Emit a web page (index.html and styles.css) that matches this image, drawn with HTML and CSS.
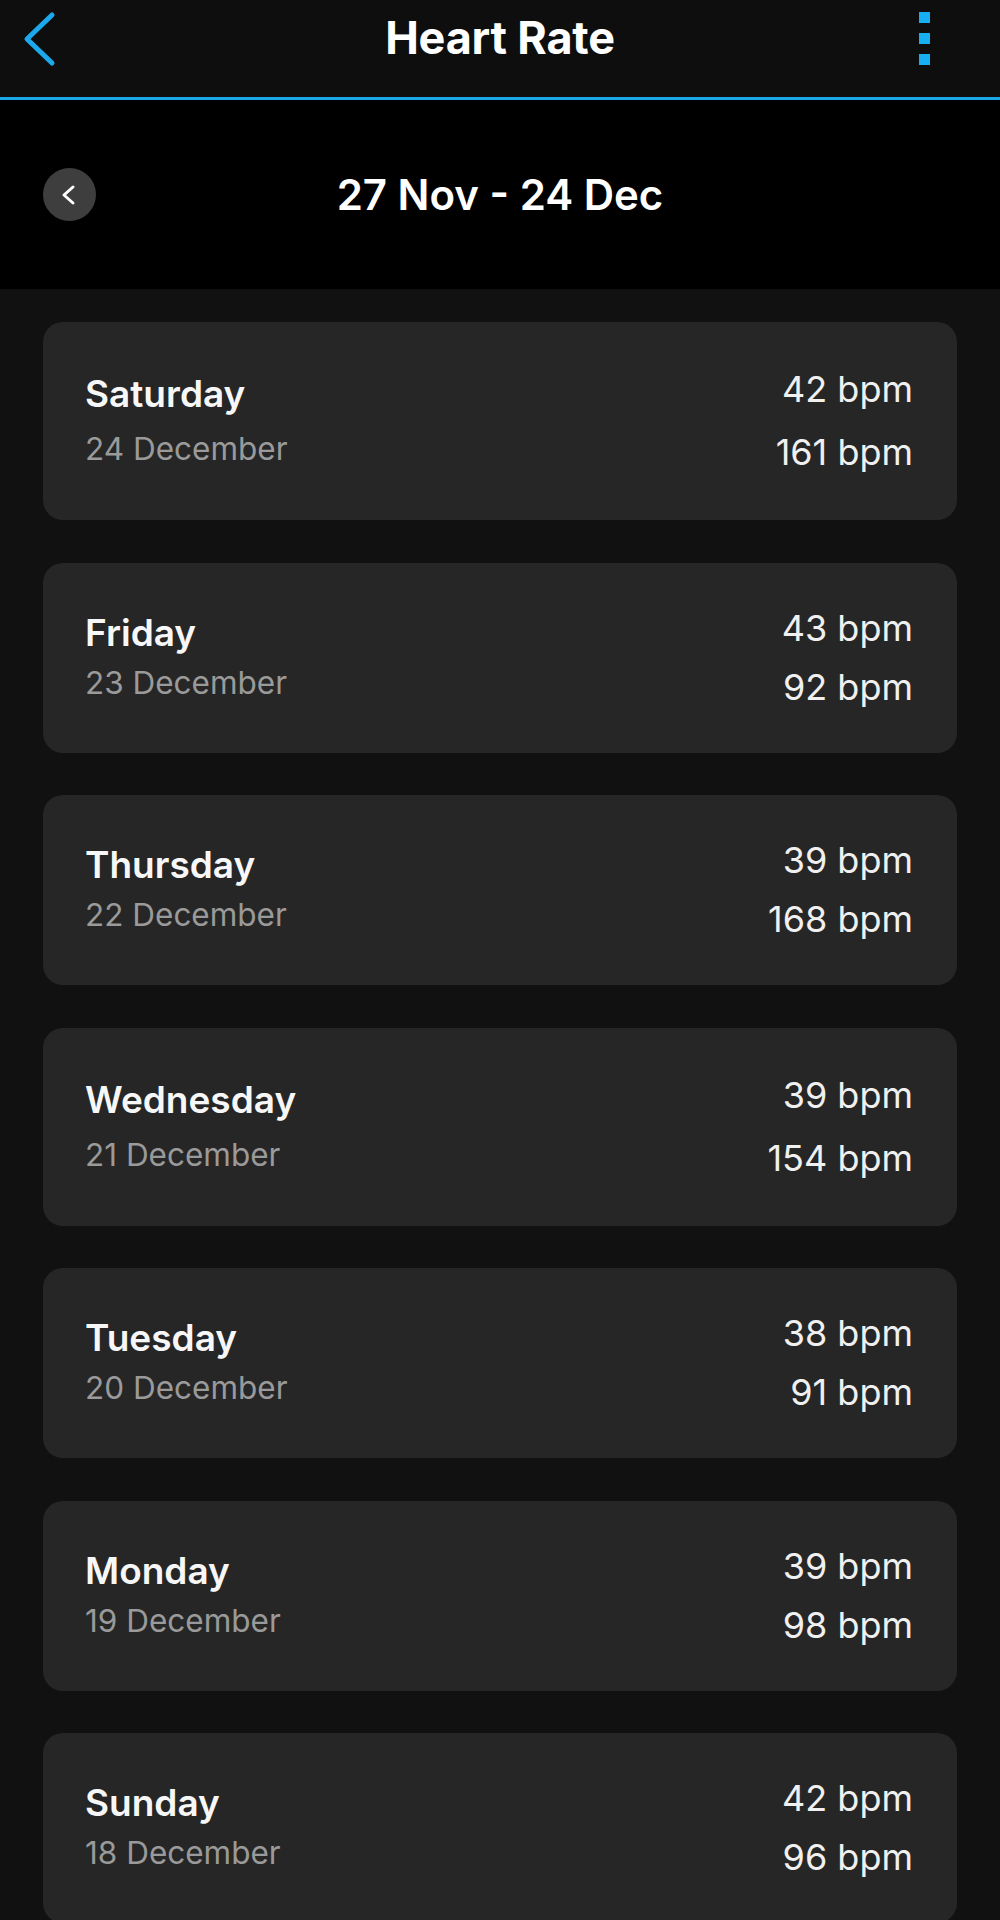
FILE: index.html
```html
<!DOCTYPE html>
<html lang="en">
<head>
    <meta charset="UTF-8">
    <meta name="viewport" content="width=device-width, initial-scale=1.0">
    <title>Heart Rate</title>
    <link rel="stylesheet" href="styles.css">
</head>
<body>
    <header class="topbar">
        <button class="back-btn" aria-label="Back">
            <svg width="40" height="60" viewBox="0 0 40 60">
                <polyline points="30,5 5,29 30,53" fill="none" stroke="#1ba8ec" stroke-width="5" stroke-linecap="round" stroke-linejoin="round"/>
            </svg>
        </button>
        <h1 class="title">Heart Rate</h1>
        <button class="menu-btn" aria-label="More">
            <span class="dot"></span>
            <span class="dot"></span>
            <span class="dot"></span>
        </button>
    </header>

    <div class="range-bar">
        <button class="prev-btn" aria-label="Previous">
            <svg width="16" height="22" viewBox="0 0 16 22">
                <polyline points="12,3 3,11 12,19" fill="none" stroke="#fff" stroke-width="3" stroke-linecap="round" stroke-linejoin="round"/>
            </svg>
        </button>
        <div class="range-label">27 Nov - 24 Dec</div>
        <div class="range-spacer"></div>
    </div>

    <main class="day-list">
        <div class="day-card day-card--wide">
            <div class="day-info">
                <div class="day-name">Saturday</div>
                <div class="day-date">24 December</div>
            </div>
            <div class="day-values">
                <div class="value">42 bpm</div>
                <div class="value">161 bpm</div>
            </div>
        </div>
        <div class="day-card">
            <div class="day-info">
                <div class="day-name">Friday</div>
                <div class="day-date">23 December</div>
            </div>
            <div class="day-values">
                <div class="value">43 bpm</div>
                <div class="value">92 bpm</div>
            </div>
        </div>
        <div class="day-card">
            <div class="day-info">
                <div class="day-name">Thursday</div>
                <div class="day-date">22 December</div>
            </div>
            <div class="day-values">
                <div class="value">39 bpm</div>
                <div class="value">168 bpm</div>
            </div>
        </div>
        <div class="day-card day-card--wide">
            <div class="day-info">
                <div class="day-name">Wednesday</div>
                <div class="day-date">21 December</div>
            </div>
            <div class="day-values">
                <div class="value">39 bpm</div>
                <div class="value">154 bpm</div>
            </div>
        </div>
        <div class="day-card">
            <div class="day-info">
                <div class="day-name">Tuesday</div>
                <div class="day-date">20 December</div>
            </div>
            <div class="day-values">
                <div class="value">38 bpm</div>
                <div class="value">91 bpm</div>
            </div>
        </div>
        <div class="day-card">
            <div class="day-info">
                <div class="day-name">Monday</div>
                <div class="day-date">19 December</div>
            </div>
            <div class="day-values">
                <div class="value">39 bpm</div>
                <div class="value">98 bpm</div>
            </div>
        </div>
        <div class="day-card">
            <div class="day-info">
                <div class="day-name">Sunday</div>
                <div class="day-date">18 December</div>
            </div>
            <div class="day-values">
                <div class="value">42 bpm</div>
                <div class="value">96 bpm</div>
            </div>
        </div>
    </main>
</body>
</html>
```

FILE: styles.css
```css
body {
    font-family: Inter, "Noto Sans", sans-serif;
    margin: 0;
    background-color: #111111;
    color: #ffffff;
}
button {
    background: none;
    border: none;
    padding: 0;
    cursor: pointer;
}
.topbar {
    height: 97px;
    display: flex;
    align-items: flex-start;
    justify-content: space-between;
    background-color: #0e0e0e;
    border-bottom: 3px solid #1aa6e8;
}
.back-btn {
    width: 81px;
    height: 70px;
    padding: 10px 0 0 22px;
    text-align: left;
}
.back-btn svg {
    display: block;
}
.title {
    margin: 0;
    padding-top: 16px;
    font-size: 45px;
    line-height: 44px;
    font-weight: 700;
    letter-spacing: -0.2px;
}
.menu-btn {
    width: 81px;
    height: 70px;
    padding: 12px 0 0 0;
    display: flex;
    flex-direction: column;
    align-items: flex-start;
    gap: 10px;
}
.dot {
    display: block;
    width: 11px;
    height: 11px;
    background-color: #18aef2;
}
.range-bar {
    height: 189px;
    display: flex;
    align-items: center;
    justify-content: space-between;
    background-color: #000000;
    padding: 0 43px;
}
.prev-btn {
    width: 53px;
    height: 53px;
    border-radius: 50%;
    background-color: #3e3e3e;
    display: flex;
    align-items: center;
    justify-content: center;
}
.prev-btn svg {
    display: block;
    margin-left: -2px;
}
.range-label {
    font-size: 42px;
    font-weight: 600;
}
.range-spacer {
    width: 53px;
}
.day-list {
    display: flex;
    flex-direction: column;
    gap: 42.5px;
    padding: 33px 43px 40px;
}
.day-card {
    display: flex;
    align-items: center;
    justify-content: space-between;
    padding: 36px 44px 36px 42px;
    background-color: #262626;
    border-radius: 20px;
}
.day-name {
    font-size: 37px;
    line-height: 50px;
    font-weight: 600;
    color: #f7f7f7;
}
.day-date {
    font-size: 31.5px;
    line-height: 50px;
    color: #9a9a9a;
}
.day-values {
    text-align: right;
}
.value {
    font-size: 36px;
    line-height: 59px;
    color: #f0f0f0;
}
.day-card--wide .day-name,
.day-card--wide .day-date {
    line-height: 55px;
}
.day-card--wide .value {
    line-height: 63px;
}
```
